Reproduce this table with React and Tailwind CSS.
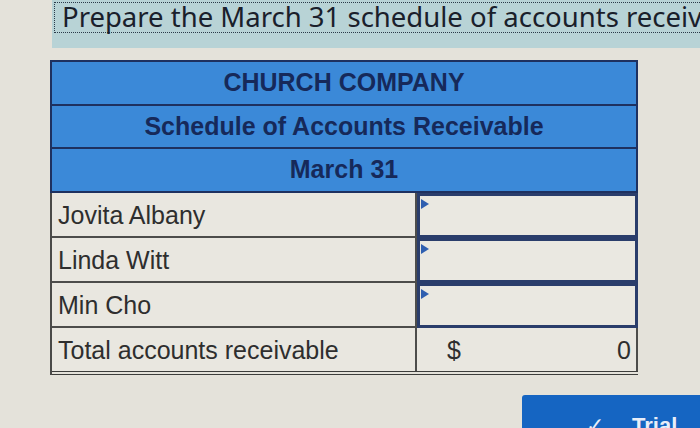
import React from "react";

function InputCell() {
  return (
    <div className="relative h-full border-[3px] border-[#2a3d6b] bg-[#eae8e1]">
      <div className="absolute left-[1px] top-[3px] w-0 h-0 border-t-[5px] border-b-[5px] border-l-[8px] border-t-transparent border-b-transparent border-l-[#2f5fb0]" />
    </div>
  );
}

export default function App() {
  const rows = ["Jovita Albany", "Linda Witt", "Min Cho"];
  return (
    <div className="w-[700px] h-[428px] overflow-hidden bg-[#e4e2da] font-['Liberation_Sans',Arial,sans-serif]">
      <div className="ml-[52px] h-[48px] bg-[#b8d3d6] pt-[2px] pl-[2px] overflow-hidden">
        <div className="h-[31px] border-t border-b border-l border-dotted border-[#2b3a4a] pl-[7px] whitespace-nowrap font-['Noto_Sans',sans-serif] text-[27.5px] leading-[27px] text-[#1a202b]">
          Prepare the March 31 schedule of accounts receivable from the customer subsidiary ledger.
        </div>
      </div>

      <div className="ml-[50px] mt-[12px] w-[588px]">
        <div className="border-2 border-b-0 border-[#1e3160] bg-[#3b89d8] text-[#16295a] font-bold text-[25px]">
          <div className="h-[44px] flex items-center justify-center border-b-2 border-[#1e3160]">
            CHURCH COMPANY
          </div>
          <div className="h-[43px] flex items-center justify-center border-b-2 border-[#1e3160]">
            Schedule of Accounts Receivable
          </div>
          <div className="h-[44px] flex items-center justify-center border-b-2 border-[#1e3160]">
            March 31
          </div>
        </div>

        <div className="border-l-2 border-[#4a4a48] text-[25px] text-[#2e2e2e]">
          {rows.map((r) => (
            <div key={r} className="grid grid-cols-[363px_223px] h-[45px]">
              <div className="border-b-2 border-[#4d4d4b] bg-[#e9e7e0] pl-[6px] pt-[3px] flex items-center">
                {r}
              </div>
              <div className="border-l-2 border-[#4d4d4b]">
                <InputCell />
              </div>
            </div>
          ))}
          <div className="grid grid-cols-[363px_223px] h-[47px] border-b-[4px] border-double border-[#3d3d3b]">
            <div className="bg-[#e9e7e0] pl-[6px] pt-[2px] flex items-center">
              Total accounts receivable
            </div>
            <div className="border-l-2 border-r-2 border-[#4d4d4b] bg-[#e9e7e0] flex items-center justify-between pl-[30px] pr-[5px] pt-[2px]">
              <span>$</span>
              <span>0</span>
            </div>
          </div>
        </div>
      </div>

      <div className="mt-[20px] pl-[522px] flex">
        <div className="shrink-0 w-[240px] h-[50px] bg-[#1565c2] rounded-[3px] flex items-start pt-[14px] pl-[64px] text-[#e8eef8] text-[22px] font-bold">
          <span className="mr-[28px] font-normal">✓</span>
          <span>Trial Balance</span>
        </div>
      </div>
    </div>
  );
}
